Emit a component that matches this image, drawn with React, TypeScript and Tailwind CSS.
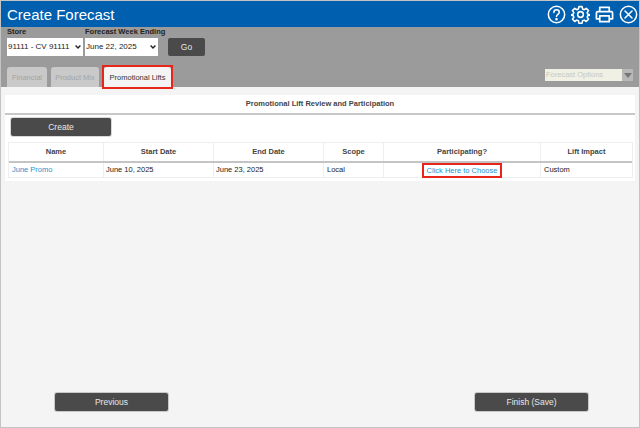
import React from "react";

const columns = [
  { name: "Name", width: "w-[95px]" },
  { name: "Start Date", width: "w-[110px]" },
  { name: "End Date", width: "w-[110px]" },
  { name: "Scope", width: "w-[60px]" },
  { name: "Participating?", width: "w-[157px]" },
  { name: "Lift Impact", width: "w-[91px]" },
];

function HeaderIcons() {
  return (
    <div className="flex items-center gap-[5px]">
      {/* help */}
      <svg width="19" height="19" viewBox="0 0 20 20" fill="none" stroke="white" strokeWidth="1.6">
        <circle cx="10" cy="10" r="8.6" />
        <path d="M7.2 7.8c0-1.7 1.3-2.8 2.9-2.8s2.8 1 2.8 2.5c0 2.3-2.9 2.4-2.9 4.7" strokeLinecap="round" />
        <circle cx="10" cy="15" r="0.6" fill="white" />
      </svg>
      {/* gear */}
      <svg width="19" height="19" viewBox="0 0 24 24" fill="none" stroke="white" strokeWidth="2" strokeLinejoin="round">
        <path d="M10 2h4l.6 3 2.100.9 2.600-1.700 2.800 2.800-1.700 2.600.9 2.100 3 .6v.4l-3 .6-.9 2.100 1.700 2.600-2.800 2.800-2.600-1.700-2.100.9-.6 3h-4l-.6-3-2.100-.9-2.600 1.700-2.800-2.800 1.700-2.600-.9-2.100-3-.6v-.4l3-.6.9-2.100-1.700-2.600 2.800-2.800 2.600 1.700 2.100-.9z" />
        <circle cx="12" cy="12" r="3.600" />
      </svg>
      {/* print */}
      <svg width="19" height="19" viewBox="0 0 20 20" fill="none" stroke="white" strokeWidth="1.800" strokeLinejoin="round">
        <path d="M5 7V2.500h10V7" />
        <path d="M5 14.500H1.500V8.500a1.500 1.500 0 0 1 1.500-1.500h14a1.500 1.500 0 0 1 1.500 1.500v6H15" />
        <path d="M5 11.500h10v6H5z" />
      </svg>
      {/* close */}
      <svg width="19" height="19" viewBox="0 0 20 20" fill="none" stroke="white" strokeWidth="1.600">
        <circle cx="10" cy="10" r="8.600" />
        <path d="M6.300 6.300l7.400 7.400M13.700 6.300l-7.400 7.400" strokeLinecap="round" />
      </svg>
    </div>
  );
}

function DarkButton({ label, className }: { label: string; className: string }) {
  return (
    <button className={`flex items-center justify-center rounded-[2px] bg-[#4a4a4a] text-[8.5px] text-[#e8e8e8] ${className}`}>
      {label}
    </button>
  );
}

function StoreSelect({ value, className }: { value: string; className: string }) {
  return (
    <div className={`relative mt-[1px] h-[18px] ${className}`}>
      <select className="block h-full w-full appearance-none bg-white pl-[1px] text-[8px] text-[#222] outline-none">
        <option>{value}</option>
      </select>
      <svg className="pointer-events-none absolute right-[2px] top-[7px]" width="6" height="4" viewBox="0 0 6 4" fill="none" stroke="#222" strokeWidth="1.4">
        <path d="M0.6 0.6L3 3l2.400-2.400" />
      </svg>
    </div>
  );
}

export default function App() {
  return (
    <div className="flex h-[428px] w-[640px] flex-col border border-[#c4c4c4] bg-[#f4f4f4] font-[Liberation_Sans,Arial,sans-serif]">
      <div className="flex h-[26px] items-center justify-between bg-[#0060af] pl-[6px] pr-[1px]">
        <span className="pt-[1px] text-[15px] leading-none text-white">Create Forecast</span>
        <HeaderIcons />
      </div>

      <div className="h-[60px] bg-[#9b9b9b] px-[6px]">
        <div className="flex items-end">
          <div className="flex w-[78px] flex-col">
            <label className="whitespace-nowrap text-[7.5px] font-bold leading-[10px] text-[#222]">Store</label>
            <StoreSelect value="91111 - CV 91111" className="w-[76px]" />
          </div>
          <div className="flex w-[83px] flex-col">
            <label className="whitespace-nowrap text-[7.5px] font-bold leading-[10px] text-[#222]">Forecast Week Ending</label>
            <StoreSelect value="June 22, 2025" className="w-[73px]" />
          </div>
          <DarkButton label="Go" className="h-[18px] w-[37px]" />
        </div>

        <div className="mt-[11px] flex items-end justify-between">
          <div className="flex items-end gap-[4px]">
            <div className="flex h-[20px] w-[40px] items-center justify-center rounded-t-[3px] bg-[#c9c9c9] pt-[1px] text-[7.5px] text-[#a3a3a3]">Financial</div>
            <div className="flex h-[20px] w-[48px] items-center justify-center rounded-t-[3px] bg-[#c9c9c9] pt-[1px] text-[7.5px] text-[#a3a3a3]">Product Mix</div>
            <div className="relative ml-[1px] flex h-[20px] w-[67px] items-center justify-center whitespace-nowrap rounded-t-[3px] bg-[#f4f4f4] pt-[1px] text-[7.5px] text-[#333]">
              Promotional Lifts
              <div className="absolute inset-x-[-2px] bottom-[-2px] top-[-2px] border-2 border-[#e8251b]" />
            </div>
          </div>
          <div className="mb-[6px] flex h-[12px] w-[88px] items-center justify-between bg-[#f0f0e4] pl-[1px]">
            <span className="text-[7.5px] text-[#c8c8bc]">Forecast Options</span>
            <span className="flex h-full w-[11px] items-center justify-center bg-[#b8b8b8]">
              <span className="h-0 w-0 border-x-[4px] border-t-[5px] border-x-transparent border-t-[#777]" />
            </span>
          </div>
        </div>
      </div>

      <div className="flex flex-1 flex-col">
        <div className="mx-[4px] mt-[8px] bg-white pb-[3px]">
          <div className="flex h-[20px] items-center justify-center border-b-2 border-[#c8c8c8] text-[7.5px] font-bold text-[#444]">
            Promotional Lift Review and Participation
          </div>
          <div className="pl-[6px] pt-[3px]">
            <DarkButton label="Create" className="h-[18px] w-[100px] shadow-[0_0_0_1px_#d8d8d8]" />
          </div>
          <div className="ml-[3px] mt-[6px] w-[625px] border border-[#eeeeee]">
            <div className="flex h-[20px] border-b-2 border-[#c4c4c4]">
              {columns.map((c) => (
                <div key={c.name} className={`flex items-center justify-center border-r border-[#eeeeee] text-[7.5px] font-bold text-[#444] last:border-r-0 ${c.width}`}>
                  {c.name}
                </div>
              ))}
            </div>
            <div className="flex h-[14px] text-[7.5px] text-[#222]">
              <div className="flex w-[95px] items-center border-r border-[#eeeeee] pl-[3px] text-[#1a94cf]">June Promo</div>
              <div className="flex w-[110px] items-center border-r border-[#eeeeee] pl-[2px]">June 10, 2025</div>
              <div className="flex w-[110px] items-center border-r border-[#eeeeee] pl-[2px]">June 23, 2025</div>
              <div className="flex w-[60px] items-center border-r border-[#eeeeee] pl-[3px]">Local</div>
              <div className="flex w-[157px] items-center justify-center border-r border-[#eeeeee]">
                <span className="relative leading-[11px] text-[#1a94cf]">
                  Click Here to Choose
                  <span className="absolute inset-x-[-5px] inset-y-[-2px] border-2 border-[#e8251b]" />
                </span>
              </div>
              <div className="flex w-[91px] items-center pl-[3px]">Custom</div>
            </div>
          </div>
        </div>

        <div className="mb-[16px] mt-auto flex justify-between pl-[54px] pr-[51px]">
          <DarkButton label="Previous" className="h-[18px] w-[113px] shadow-[0_0_0_1px_#c8c8c8]" />
          <DarkButton label="Finish (Save)" className="h-[18px] w-[113px] shadow-[0_0_0_1px_#c8c8c8]" />
        </div>
      </div>
    </div>
  );
}
